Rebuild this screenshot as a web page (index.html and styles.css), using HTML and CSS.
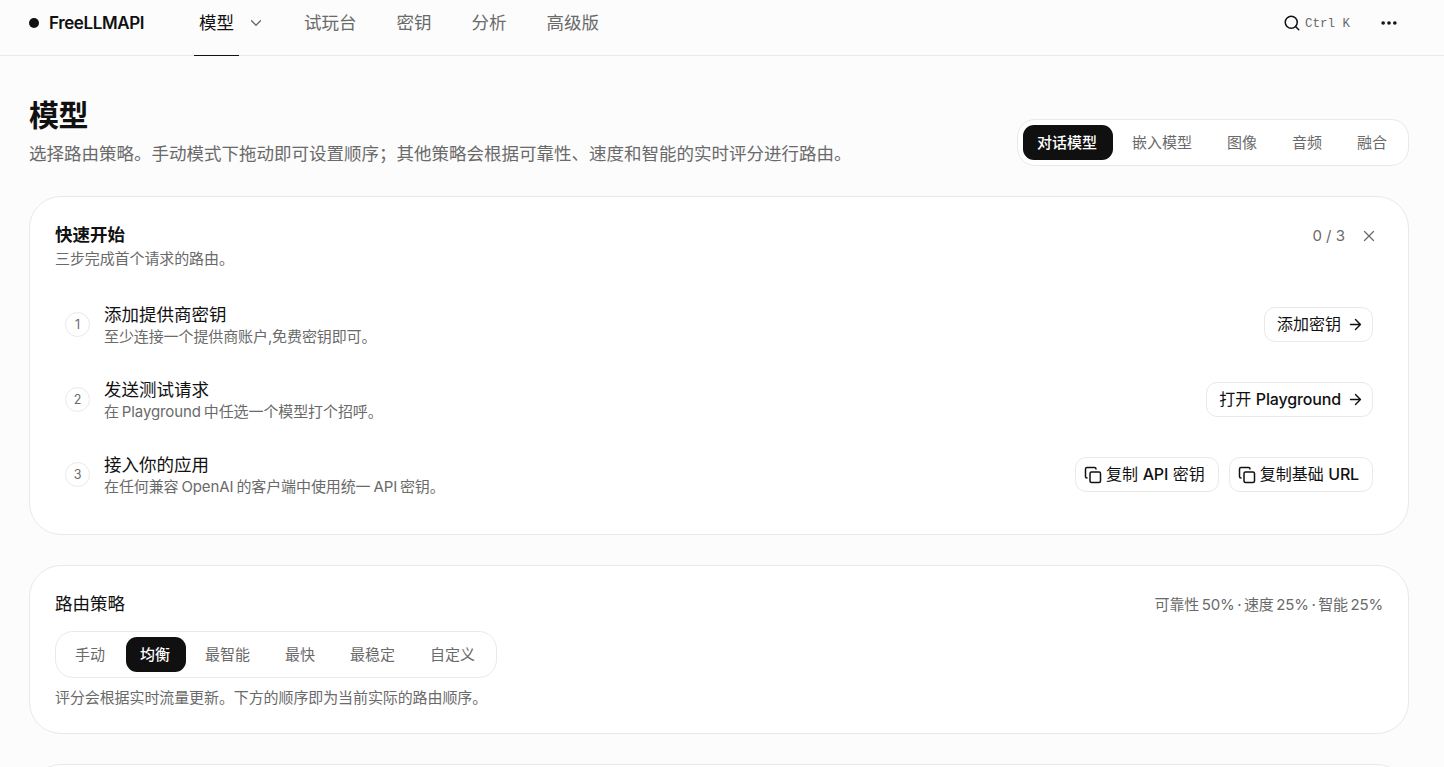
FILE: index.html
```html
<!DOCTYPE html>
<html lang="zh-CN">
<head>
    <meta charset="UTF-8">
    <meta name="viewport" content="width=device-width, initial-scale=1.0">
    <title>模型 - FreeLLMAPI</title>
    <link rel="stylesheet" href="styles.css">
</head>
<body>
    <header class="topbar">
        <a class="brand" href="#"><span class="brand-dot"></span><span>FreeLLMAPI</span></a>
        <nav class="nav">
            <a class="nav-link active" href="#">模型</a>
            <button class="nav-more" aria-label="展开">
                <svg class="icon" width="18" height="18" viewBox="0 0 24 24"><path d="m6 9 6 6 6-6"/></svg>
            </button>
            <a class="nav-link" href="#">试玩台</a>
            <a class="nav-link" href="#">密钥</a>
            <a class="nav-link" href="#">分析</a>
            <a class="nav-link" href="#">高级版</a>
        </nav>
        <div class="tools">
            <button class="search">
                <svg class="icon" width="18" height="18" viewBox="0 0 24 24"><circle cx="11" cy="11" r="8"/><path d="m21 21-4.3-4.3"/></svg>
                <kbd>Ctrl K</kbd>
            </button>
            <button class="menu" aria-label="菜单">
                <svg class="icon dots" width="20" height="20" viewBox="0 0 24 24"><circle cx="12" cy="12" r="1"/><circle cx="19" cy="12" r="1"/><circle cx="5" cy="12" r="1"/></svg>
            </button>
        </div>
    </header>

    <main class="page">
        <div class="page-head">
            <div>
                <h1>模型</h1>
                <p class="lead">选择路由策略。手动模式下拖动即可设置顺序；其他策略会根据可靠性、速度和智能的实时评分进行路由。</p>
            </div>
            <div class="tabs">
                <button class="tab active">对话模型</button>
                <button class="tab">嵌入模型</button>
                <button class="tab">图像</button>
                <button class="tab">音频</button>
                <button class="tab">融合</button>
            </div>
        </div>

        <section class="card quickstart">
            <div class="card-head">
                <div>
                    <h2>快速开始</h2>
                    <p class="hint">三步完成首个请求的路由。</p>
                </div>
                <div class="progress">
                    <span>0 / 3</span>
                    <button class="close" aria-label="关闭">
                        <svg class="icon" width="18" height="18" viewBox="0 0 24 24"><path d="M18 6 6 18M6 6l12 12"/></svg>
                    </button>
                </div>
            </div>
            <ol class="steps">
                <li class="step">
                    <span class="step-num">1</span>
                    <div class="step-text">
                        <h3>添加提供商密钥</h3>
                        <p class="hint">至少连接一个提供商账户,免费密钥即可。</p>
                    </div>
                    <button class="btn">
                        <span>添加密钥</span>
                        <svg class="icon" width="17" height="17" viewBox="0 0 24 24"><path d="M5 12h14M12 5l7 7-7 7"/></svg>
                    </button>
                </li>
                <li class="step">
                    <span class="step-num">2</span>
                    <div class="step-text">
                        <h3>发送测试请求</h3>
                        <p class="hint">在 Playground 中任选一个模型打个招呼。</p>
                    </div>
                    <button class="btn">
                        <span>打开 <b>Playground</b></span>
                        <svg class="icon" width="17" height="17" viewBox="0 0 24 24"><path d="M5 12h14M12 5l7 7-7 7"/></svg>
                    </button>
                </li>
                <li class="step">
                    <span class="step-num">3</span>
                    <div class="step-text">
                        <h3>接入你的应用</h3>
                        <p class="hint">在任何兼容 OpenAI 的客户端中使用统一 API 密钥。</p>
                    </div>
                    <button class="btn btn-copy">
                        <svg class="icon" width="18" height="18" viewBox="0 0 24 24"><rect x="8" y="8" width="14" height="14" rx="2"/><path d="M4 16c-1.1 0-2-.9-2-2V4c0-1.1.9-2 2-2h10c1.1 0 2 .9 2 2"/></svg>
                        <span>复制 <b>API</b> 密钥</span>
                    </button>
                    <button class="btn btn-copy">
                        <svg class="icon" width="18" height="18" viewBox="0 0 24 24"><rect x="8" y="8" width="14" height="14" rx="2"/><path d="M4 16c-1.1 0-2-.9-2-2V4c0-1.1.9-2 2-2h10c1.1 0 2 .9 2 2"/></svg>
                        <span>复制基础 <b>URL</b></span>
                    </button>
                </li>
            </ol>
        </section>

        <section class="card strategy">
            <div class="card-head">
                <h3>路由策略</h3>
                <span class="weights">可靠性 50% · 速度 25% · 智能 25%</span>
            </div>
            <div class="tabs">
                <button class="tab">手动</button>
                <button class="tab active">均衡</button>
                <button class="tab">最智能</button>
                <button class="tab">最快</button>
                <button class="tab">最稳定</button>
                <button class="tab">自定义</button>
            </div>
            <p class="hint">评分会根据实时流量更新。下方的顺序即为当前实际的路由顺序。</p>
        </section>

        <section class="card"></section>
    </main>
</body>
</html>
```
FILE: styles.css
```css
:root {
    --background: #fcfcfc;
    --surface: #ffffff;
    --text: #111111;
    --muted: #6a6a6a;
    --border: #e9e9e9;
}

* {
    box-sizing: border-box;
}

body {
    margin: 0;
    height: 767px;
    overflow: hidden;
    background: var(--background);
    color: var(--text);
    font-family: Inter, "Noto Sans CJK SC", sans-serif;
    font-size: 17.5px;
    line-height: 25px;
}

h1, h2, h3, p, ol {
    margin: 0;
    padding: 0;
}

button {
    border: none;
    background: none;
    padding: 0;
    color: inherit;
    font: inherit;
    cursor: pointer;
}

a {
    color: inherit;
    text-decoration: none;
}

.icon {
    display: block;
    flex: none;
    fill: none;
    stroke: currentColor;
    stroke-width: 2;
    stroke-linecap: round;
    stroke-linejoin: round;
}

/* Top bar */
.topbar {
    display: flex;
    height: 56px;
    padding: 0 45px 0 29px;
    border-bottom: 1px solid var(--border);
}

.brand {
    display: flex;
    align-items: center;
    gap: 10px;
    width: 165px;
    padding-bottom: 9px;
    font-size: 17px;
    font-weight: 600;
    letter-spacing: -0.4px;
}

.brand-dot {
    width: 10px;
    height: 10px;
    border-radius: 50%;
    background: var(--text);
}

.nav {
    display: flex;
    gap: 30px;
}

.nav-link {
    height: 56px;
    padding: 10px 5px 0;
    color: var(--muted);
}

.nav-link.active {
    color: var(--text);
    border-bottom: 1px solid var(--text);
}

.nav-more {
    width: 30px;
    height: 45px;
    margin-left: -30px;
    padding-left: 8px;
    color: var(--muted);
}

.nav-more .icon {
    stroke-width: 1.7;
}

.tools {
    display: flex;
    align-items: center;
    gap: 29px;
    height: 45px;
    margin-left: auto;
}

.search {
    display: flex;
    align-items: center;
    gap: 4px;
}

.search kbd {
    padding-top: 3px;
    font-family: "Liberation Mono", monospace;
    font-size: 12.5px;
    color: var(--muted);
}

.dots {
    stroke-width: 2.4;
}

/* Page */
.page {
    width: 1380px;
    margin-left: 29px;
    padding-top: 40px;
}

.page-head {
    display: flex;
    justify-content: space-between;
    align-items: flex-end;
    margin-bottom: 30px;
}

h1 {
    font-size: 30px;
    font-weight: 700;
    line-height: 38px;
    letter-spacing: -0.6px;
}

.lead {
    margin: 7px 0 0;
    color: var(--muted);
}

h2, h3 {
    font-size: 17.5px;
    line-height: 25px;
}

h2 {
    font-weight: 700;
}

h3 {
    font-weight: 400;
}

.hint {
    font-size: 15px;
    line-height: 20px;
    letter-spacing: -0.1px;
    word-spacing: -1.2px;
    color: var(--muted);
}

.tabs {
    display: flex;
    width: fit-content;
    gap: 5px;
    padding: 5px;
    border: 1px solid var(--border);
    border-radius: 18px;
    background: var(--surface);
}

.tab {
    height: 35px;
    padding: 0 16px 0 14px;
    border-radius: 11px;
    font-size: 15px;
    line-height: 35px;
    color: var(--muted);
}

.tab.active {
    background: #101010;
    color: #ffffff;
    font-weight: 500;
}

/* Cards */
.card {
    height: 169px;
    margin-bottom: 30px;
    padding: 25px;
    border: 1px solid var(--border);
    border-radius: 32px;
    background: var(--surface);
}

.quickstart {
    height: 339px;
}

.quickstart .card-head {
    height: 45px;
}

.quickstart .card-head .hint {
    margin-top: 2px;
}

.card-head {
    display: flex;
    justify-content: space-between;
}

.progress {
    display: flex;
    align-items: center;
    gap: 15px;
    height: 27px;
    padding-right: 5px;
    font-size: 15px;
    color: var(--muted);
}

.close .icon {
    stroke-width: 1.7;
}

/* Steps */
.steps {
    margin-top: 25px;
    list-style: none;
}

.step {
    display: flex;
    align-items: center;
    gap: 10px;
    height: 65px;
    margin-bottom: 10px;
    padding: 0 10px;
}

.step-num {
    width: 25px;
    height: 25px;
    margin-right: 4px;
    border: 1px solid var(--border);
    border-radius: 50%;
    font-size: 12.5px;
    line-height: 23px;
    text-align: center;
    color: var(--muted);
}

.step-text {
    flex: 1;
}

.btn {
    display: flex;
    align-items: center;
    gap: 6px;
    height: 35px;
    padding: 0 8px 1px 12px;
    border: 1px solid var(--border);
    border-radius: 11px;
    font-size: 16px;
    line-height: 32px;
    white-space: nowrap;
}

.btn b {
    font-weight: 500;
    letter-spacing: -0.15px;
}

.btn-copy {
    gap: 4px;
    padding: 0 13px 1px 8px;
}

.btn-copy .icon {
    margin-top: 2px;
}

/* Strategy */
.strategy .tabs {
    margin: 14px 0 10px;
}

.weights {
    padding-top: 1px;
    font-size: 15px;
    letter-spacing: -0.2px;
    word-spacing: -1.3px;
    color: var(--muted);
}
```
